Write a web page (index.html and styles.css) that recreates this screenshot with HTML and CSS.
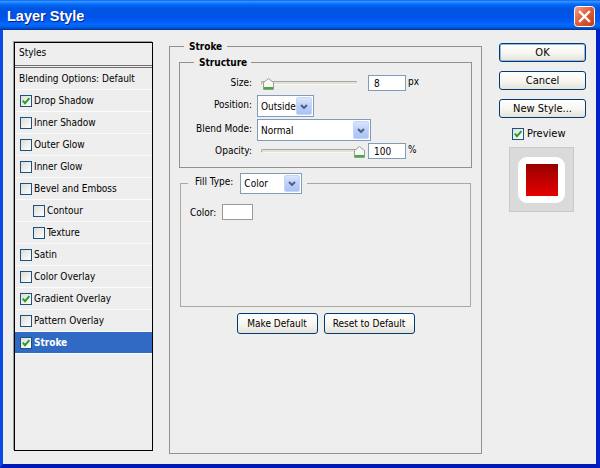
FILE: index.html
```html
<!DOCTYPE html>
<html lang="en">
<head>
    <meta charset="UTF-8">
    <title>Layer Style</title>
    <link rel="stylesheet" href="styles.css">
</head>
<body>
    <div class="window">
        <div class="titlebar">
            <span class="title">Layer Style</span>
            <span class="close">
                <svg width="21" height="21" viewBox="0 0 21 21">
                    <defs>
                        <linearGradient id="closeFill" x1="0" y1="0" x2="1" y2="1">
                            <stop offset="0" stop-color="#f2a48c"/>
                            <stop offset="0.45" stop-color="#e2603a"/>
                            <stop offset="1" stop-color="#c33a12"/>
                        </linearGradient>
                    </defs>
                    <rect x="0.5" y="0.5" width="20" height="20" rx="3" fill="url(#closeFill)" stroke="#fff"/>
                    <path d="M6 6 L15 15 M15 6 L6 15" stroke="#fff" stroke-width="2.4" stroke-linecap="square"/>
                </svg>
            </span>
        </div>

        <div class="dialog">
            <!-- effects list -->
            <ul class="styles-list">
                <li class="head">Styles</li>
                <li class="head blending">Blending Options: Default</li>
                <li><span class="check on"><svg viewBox="0 0 10 10"><path d="M1.8 4.6 L4 7.2 L8.4 2.2"/></svg></span>Drop Shadow</li>
                <li><span class="check"></span>Inner Shadow</li>
                <li><span class="check"></span>Outer Glow</li>
                <li><span class="check"></span>Inner Glow</li>
                <li><span class="check"></span>Bevel and Emboss</li>
                <li class="sub"><span class="check"></span>Contour</li>
                <li class="sub"><span class="check"></span>Texture</li>
                <li><span class="check"></span>Satin</li>
                <li><span class="check"></span>Color Overlay</li>
                <li><span class="check on"><svg viewBox="0 0 10 10"><path d="M1.8 4.6 L4 7.2 L8.4 2.2"/></svg></span>Gradient Overlay</li>
                <li><span class="check"></span>Pattern Overlay</li>
                <li class="selected"><span class="check on"><svg viewBox="0 0 10 10"><path d="M1.8 4.6 L4 7.2 L8.4 2.2"/></svg></span>Stroke</li>
            </ul>

            <!-- stroke settings -->
            <fieldset class="group stroke">
                <legend>Stroke</legend>

                <fieldset class="group structure">
                    <legend>Structure</legend>

                    <div class="row short">
                        <label>Size:</label>
                        <div class="slider">
                            <div class="track"></div>
                            <svg class="thumb" style="left: 2px" width="11" height="12" viewBox="0 0 11 12">
                                <path d="M0.5 11.5 V4.5 L5.5 0.5 L10.5 4.5 V11.5 Z" fill="#f8f8f5" stroke="#9a9a90"/>
                                <rect x="1" y="9" width="9" height="2" fill="#3cae3c"/>
                            </svg>
                        </div>
                        <input class="textbox" type="text" value="8">
                        <span class="unit">px</span>
                    </div>

                    <div class="row tall">
                        <label>Position:</label>
                        <div class="combo position">
                            <span class="combo-text">Outside</span>
                            <span class="combo-btn"><svg width="8" height="5" viewBox="0 0 8 5"><path d="M1 1 L4 4 L7 1"/></svg></span>
                        </div>
                    </div>

                    <div class="row tall">
                        <label>Blend Mode:</label>
                        <div class="combo blend">
                            <span class="combo-text">Normal</span>
                            <span class="combo-btn"><svg width="8" height="5" viewBox="0 0 8 5"><path d="M1 1 L4 4 L7 1"/></svg></span>
                        </div>
                    </div>

                    <div class="row short">
                        <label>Opacity:</label>
                        <div class="slider">
                            <div class="track"></div>
                            <svg class="thumb" style="left: 93px" width="11" height="12" viewBox="0 0 11 12">
                                <path d="M0.5 11.5 V4.5 L5.5 0.5 L10.5 4.5 V11.5 Z" fill="#f8f8f5" stroke="#9a9a90"/>
                                <rect x="1" y="9" width="9" height="2" fill="#3cae3c"/>
                            </svg>
                        </div>
                        <input class="textbox" type="text" value="100">
                        <span class="unit">%</span>
                    </div>
                </fieldset>

                <fieldset class="fill">
                    <legend>
                        <span class="fill-label">Fill Type:</span>
                        <div class="combo fill-type">
                            <span class="combo-text">Color</span>
                            <span class="combo-btn"><svg width="8" height="5" viewBox="0 0 8 5"><path d="M1 1 L4 4 L7 1"/></svg></span>
                        </div>
                    </legend>
                    <div class="color-row">
                        <span>Color:</span>
                        <span class="swatch"></span>
                    </div>
                </fieldset>

                <div class="defaults">
                    <button class="btn make-default">Make Default</button>
                    <button class="btn reset-default">Reset to Default</button>
                </div>
            </fieldset>

            <!-- dialog actions -->
            <div class="actions">
                <button class="btn default">OK</button>
                <button class="btn">Cancel</button>
                <button class="btn">New Style...</button>
                <div class="preview-toggle">
                    <span class="check on"><svg viewBox="0 0 10 10"><path d="M1.8 4.6 L4 7.2 L8.4 2.2"/></svg></span>Preview
                </div>
                <div class="preview">
                    <div class="preview-tile">
                        <div class="preview-fill"></div>
                    </div>
                </div>
            </div>
        </div>
    </div>
</body>
</html>
```

FILE: styles.css
```css
/* General Styles */
body {
    margin: 0;
    font-family: "DejaVu Sans Condensed", "DejaVu Sans", sans-serif;
    font-stretch: condensed;
    font-size: 10px;
    color: #000;
}

.window {
    width: 600px;
    height: 468px;
    display: flex;
    flex-direction: column;
}

/* Title bar */
.titlebar {
    height: 30px;
    flex-shrink: 0;
    display: flex;
    align-items: center;
    justify-content: space-between;
    padding: 0 5px 0 7px;
    background: linear-gradient(#0058ee 0%, #3a93ff 4%, #288eff 7%, #127dff 10%, #036ffc 14%, #0262ee 20%, #0057e5 28%, #0054e3 40%, #0055eb 60%, #005bf5 70%, #026afe 80%, #0062ef 88%, #0052d6 94%, #0040ab 97%, #003092 100%);
}

.title {
    font-family: "Liberation Sans", sans-serif;
    font-stretch: normal;
    font-weight: bold;
    font-size: 14.5px;
    color: #fff;
    text-shadow: 1px 1px 0 #0a1e8a;
    margin-top: 1px;
}

.close {
    display: flex;
    margin-top: 2px;
}

/* Dialog body */
.dialog {
    flex: 1;
    display: flex;
    align-items: flex-start;
    padding: 12px 10px 0 11px;
    background: #eeeeee;
    border-left: 3px solid #0b4be6;
    border-right: 4px solid #0021c9;
    border-bottom: 4px solid #0019b7;
}

/* Effects list */
.styles-list {
    list-style: none;
    margin: 0;
    padding: 0;
    width: 139px;
    height: 409px;
    box-sizing: border-box;
    border: 1px solid #000;
    box-shadow: -1px -1px 0 #9c9c9c;
    flex-shrink: 0;
}

.styles-list li {
    display: flex;
    align-items: center;
    height: 22px;
    box-sizing: border-box;
    padding-left: 5px;
    border-bottom: 1px solid #fbfbfb;
    white-space: nowrap;
}

.styles-list .head {
    padding-left: 4px;
}

.styles-list .head:first-child {
    height: 25px;
    padding-bottom: 3px;
    border-bottom: 3px double #707070;
}

.styles-list .sub {
    padding-left: 18px;
}

.styles-list .selected {
    background: #316ac5;
    color: #fff;
    font-weight: bold;
}

.check {
    width: 12px;
    height: 12px;
    box-sizing: border-box;
    border: 1px solid #1c5180;
    background: linear-gradient(135deg, #dcdcd7, #ffffff);
    margin-right: 2px;
    flex-shrink: 0;
    display: flex;
}

.check svg {
    width: 10px;
    height: 10px;
}

.check svg path {
    fill: none;
    stroke: #21a121;
    stroke-width: 1.9;
}

/* Group boxes */
.group {
    border: 1px solid #919191;
    margin: 0;
    min-width: 0;
    box-sizing: border-box;
}

.group > legend {
    font-weight: bold;
    line-height: 13px;
}

.stroke {
    width: 313px;
    height: 414px;
    margin: -2px 0 0 16px;
    padding: 3px 9px 0;
    flex-shrink: 0;
}

.stroke > legend {
    margin-left: 5px;
    padding: 0 5px;
}

.structure {
    padding: 6px 0 8px;
}

.structure > legend {
    margin-left: 14px;
    padding: 0 4px 0 5px;
}

.row {
    display: flex;
    align-items: flex-start;
}

.row label {
    width: 72px;
    text-align: right;
    line-height: 13px;
    flex-shrink: 0;
}

.row.short {
    height: 16px;
}

.row.short label {
    margin-top: 1px;
}

.row.tall {
    height: 22px;
    margin-top: 2px;
}

.row.tall label {
    margin-top: 3px;
}

.row.short + .row.tall {
    margin-top: 4px;
}

.row.tall + .row.short {
    margin-top: 2px;
}

/* Slider */
.slider {
    position: relative;
    width: 97px;
    height: 16px;
    margin-left: 9px;
}

.track {
    margin-top: 6px;
    height: 4px;
    box-sizing: border-box;
    border: 1px solid;
    border-color: #a8a79f #f7f7f3 #f7f7f3 #a8a79f;
    background: #e3e1d6;
    border-radius: 2px;
}

.thumb {
    position: absolute;
    top: 3px;
}

.textbox {
    width: 38px;
    height: 16px;
    box-sizing: border-box;
    margin: 0 0 0 10px;
    padding: 0 0 0 5px;
    border: 1px solid #7f9db9;
    background: #fff;
    font: inherit;
    line-height: 14px;
}

.unit {
    margin-left: 2px;
    line-height: 13px;
}

/* Combo box */
.combo {
    display: flex;
    align-items: center;
    height: 22px;
    box-sizing: border-box;
    border: 1px solid #7f9db9;
    background: #fff;
    margin-left: 5px;
}

.combo-text {
    flex: 1;
    padding-left: 3px;
}

.combo-btn {
    width: 16px;
    height: 18px;
    box-sizing: border-box;
    margin-right: 1px;
    border: 1px solid #c4d4fb;
    border-radius: 2px;
    background: linear-gradient(#dbe5fd, #bdcff9 50%, #aac2f5);
    display: flex;
    align-items: center;
    justify-content: center;
}

.combo-btn path {
    fill: none;
    stroke: #4d6185;
    stroke-width: 2;
}

.combo.position {
    width: 57px;
}

.combo.blend {
    width: 114px;
}

/* Fill type */
.fill {
    margin: 5px 1px 0;
    padding: 0;
    height: 134px;
    min-width: 0;
    box-sizing: border-box;
    border: 1px solid #aca899;
}

.fill > legend {
    display: flex;
    align-items: flex-start;
    margin-left: 7px;
    padding: 0 5px 0 7px;
}

.fill-label {
    margin-top: 2px;
    line-height: 13px;
}

.combo.fill-type {
    width: 62px;
    height: 21px;
    margin-left: 7px;
}

.combo.fill-type .combo-btn {
    height: 17px;
}

.color-row {
    display: flex;
    align-items: center;
    padding: 10px 0 0 9px;
}

.swatch {
    width: 31px;
    height: 16px;
    box-sizing: border-box;
    border: 1px solid #9a9a9a;
    background: #fff;
    margin-left: 6px;
}

/* Buttons */
.btn {
    height: 21px;
    box-sizing: border-box;
    border: 1px solid #003c74;
    border-radius: 3px;
    background: linear-gradient(#ffffff, #f6f5f0 55%, #e4e2d8);
    font: inherit;
    color: #000;
    padding: 0;
}

.defaults {
    display: flex;
    justify-content: center;
    gap: 6px;
    margin-top: 6px;
}

.make-default {
    width: 81px;
}

.reset-default {
    width: 91px;
}

.actions {
    width: 87px;
    margin: 1px 0 0 17px;
    display: flex;
    flex-direction: column;
    flex-shrink: 0;
}

.actions .btn {
    height: 19px;
    margin-bottom: 9px;
    font-size: 11px;
}

.actions .btn.default {
    box-shadow: inset 0 0 0 1px #98b8ea;
}

.preview-toggle {
    display: flex;
    align-items: center;
    height: 13px;
    padding-left: 13px;
    font-size: 11px;
}

.preview-toggle .check {
    margin-right: 3px;
}

.preview {
    width: 65px;
    height: 65px;
    box-sizing: border-box;
    margin: 7px 0 0 10px;
    border: 1px solid #c9c9c9;
    background: #dadada;
    display: flex;
    align-items: center;
    justify-content: center;
}

.preview-tile {
    width: 47px;
    height: 46px;
    border-radius: 9px;
    background: #fff;
    display: flex;
    align-items: center;
    justify-content: center;
}

.preview-fill {
    width: 32px;
    height: 32px;
    background: linear-gradient(#970000, #e60000);
}
```
